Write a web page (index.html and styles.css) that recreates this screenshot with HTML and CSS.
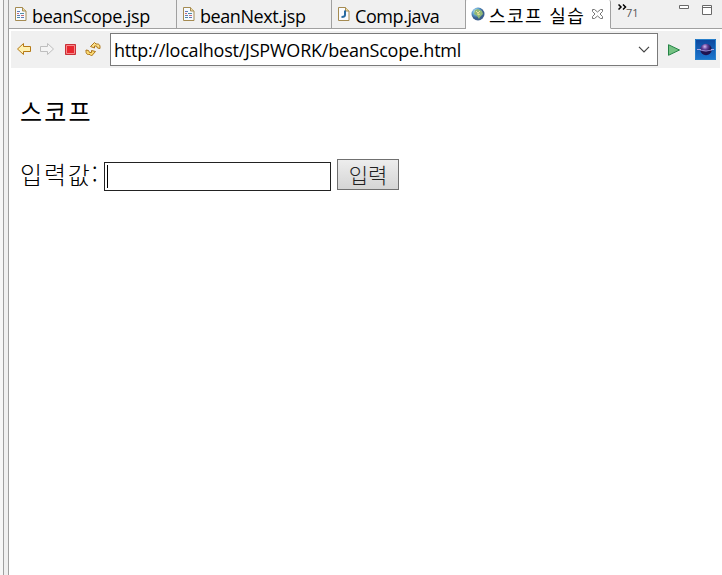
FILE: index.html
```html
<!DOCTYPE html>
<html lang="ko">
<head>
<meta charset="utf-8">
<title>스코프 실습</title>
<link rel="stylesheet" href="styles.css">
</head>
<body>
<svg width="0" height="0" class="defs">
  <symbol id="doc" viewBox="0 0 12 14"><path d="M.5.5h7l3.500 3.500v9.500H.5z" fill="#f5faff" stroke="#a58b52"/><path d="M7.500.5V4H11" fill="#eedba3" stroke="#a58b52"/><path d="M2 4.500h3M2 8.500h3M6 10.500h3" stroke="#6079b5"/><path d="M2 6.500h2M6 8.500h3" stroke="#c66b78"/><path d="M5 6.500h4M2 10.500h3" stroke="#518ba5"/></symbol>
</svg>
<div class="window">
  <div class="sash"></div>
  <main class="editor">
    <nav class="tabs">
      <div class="tab first"><svg class="file" width="12" height="14"><use href="#doc"/></svg><span class="t1">beanScope.jsp</span></div>
      <div class="tab second"><svg class="file" width="12" height="14"><use href="#doc"/></svg><span class="t2">beanNext.jsp</span></div>
      <div class="tab third"><svg class="file" width="12" height="14" viewBox="0 0 12 14"><path d="M.5.5h7l3.500 3.500v9.500H.5z" fill="#f8fbff" stroke="#a58b52"/><path d="M7.500.5V4H11" fill="#eedba3" stroke="#a58b52"/><path d="M7 3.500v4.500q0 2-3.500 2" fill="none" stroke="#286aa0" stroke-width="2"/></svg><span class="t3">Comp.java</span></div>
      <div class="tab active">
        <svg class="globe" width="14" height="14" viewBox="0 0 14 14"><defs><radialGradient id="g" cx=".35" cy=".3"><stop stop-color="#d5effa"/><stop offset=".6" stop-color="#5b9fd0"/><stop offset="1" stop-color="#3a5f8e"/></radialGradient></defs><circle cx="7" cy="7" r="6.500" fill="url(#g)"/><path d="M4 3l3-1 4 2 1 3-3 3-1 2-2-3-3-2z" fill="#8fb877"/><path d="M5 4l2 2 2-2M7 6v2l2-1" stroke="#ecdf9a" fill="none"/></svg>
        <span class="t4">스코프 실습</span>
        <svg class="close" width="11" height="10" viewBox="0 0 11 10"><path d="M.5.5h2l3 2.500 3-2.500h2v2L8 5l2.500 2.500v2h-2l-3-2.500-3 2.500h-2v-2L3 5 .5 2.500z" fill="#fff" stroke="#777"/></svg>
      </div>
      <div class="rest">
        <svg class="more" width="9" height="6" viewBox="0 0 9 6"><path d="M.5.5L3 3 .5 5.500M5 .5L7.500 3 5 5.500" fill="none" stroke="#000" stroke-width="1.500"/></svg>
        <span class="count">71</span>
        <svg class="winbtns" width="34" height="12" viewBox="0 0 34 12"><path d="M.5 1.500h9v3h-9zM23.500 1.500h9v9h-9zM23.500 3.500h9" fill="#fff" stroke="#696969"/></svg>
      </div>
    </nav>
    <div class="toolbar">
      <svg class="nav" width="94" height="36" viewBox="0 0 94 36">
        <path d="M6.500 18l6-5.500v3h7v5h-7v3z" fill="#fff1b0" stroke="#b67a16"/>
        <path d="M42.500 18l-6-5.500v3h-7v5h7v3z" fill="#f4f4f4" stroke="#bebebe"/>
        <path d="M54.500 13.500h10v10h-10z" fill="#e8272f" stroke="#c83138"/><path d="M55.500 14.500h8v8h-8z" fill="none" stroke="#f58a8c"/>
        <path d="M79.500 15.500l4-4 1.500 1.500h1.500c2 0 2.500 1.500 2.500 3v1.500l-2.500-.5-1-2h-2v2z" fill="#fbe08a" stroke="#ad7419"/>
        <path d="M84.500 20.500l-4 4.500-1.500-1.500h-1.500c-2 0-2.500-1.500-2.500-3V19l2.500.5 1 2h2v-2z" fill="#fbdb72" stroke="#ad7419"/>
      </svg>
      <div class="address"><span>http://localhost/JSPWORK/beanScope.html</span><svg width="12" height="7" viewBox="0 0 12 7"><path d="M1 .8l5 5 5-5" fill="none" stroke="#444" stroke-width="1.200"/></svg></div>
      <svg class="go" width="12" height="12" viewBox="0 0 12 12"><path d="M.5.7v10.600L11.500 6z" fill="#75c283" stroke="#238345"/></svg>
      <svg class="planet" width="21" height="21" viewBox="0 0 21 21"><defs><linearGradient id="b" x2="0" y2="1"><stop stop-color="#0d459c"/><stop offset="1" stop-color="#1c78d0"/></linearGradient><radialGradient id="p" cx=".4" cy=".25"><stop stop-color="#d5b9ed"/><stop offset=".5" stop-color="#61429a"/><stop offset="1" stop-color="#201451"/></radialGradient></defs><path d="M0 0h21v21H0z" fill="url(#b)"/><path d="M.5.5h20v20H.5z" fill="none" stroke="#2880cb"/><circle cx="11" cy="10.500" r="5.800" fill="url(#p)"/><path d="M2 10.500h4M16 10.500h3" stroke="#a6a3e5"/><path d="M5 11q6 2 12 0" fill="none" stroke="#a6a3e5" stroke-width=".8"/></svg>
    </div>
    <section class="page">
      <h1>스코프</h1>
      <form><label for="value">입력값:</label><div id="value" class="field"><i></i></div><button type="button">입력</button></form>
    </section>
  </main>
</div>
</body>
</html>
```
FILE: styles.css
```css
* { box-sizing: border-box; }
body { margin: 0; background: #fff; color: #000; overflow: hidden; font-family: "Open Sans", "Noto Sans CJK KR", sans-serif; }
.defs { position: absolute; }
svg { display: block; flex: none; }
.window { display: flex; width: 722px; height: 575px; }
.sash { width: 9px; flex: none; background: linear-gradient(90deg, #f7f7f7 0 3px, #a0a0a0 3px 4px, #f0f0f0 4px 8px, #a0a0a0 8px 9px); }
.editor { flex: 1; min-width: 0; }
.tabs { display: flex; height: 29px; background: #f0f0f0; font-size: 18px; line-height: 24px; white-space: nowrap; }
.tab { display: flex; align-items: flex-start; border-right: 1px solid #a0a0a0; border-bottom: 1px solid #a0a0a0; flex: none; padding-left: 6px; }
.tab span { margin: 4px 0 0 5px; }
.file { margin-top: 7px; }
.first { width: 168px; }
.second { width: 155px; }
.third { width: 134px; }
.active { width: 145px; background: #fff; border-bottom-color: #fff; padding-left: 5px; border-radius: 2px 2px 0 0; }
.globe { margin-top: 7px; }
.close { margin: 9px 0 0 7px; }
.t1 { letter-spacing: -.27px; }
.t2, .t3 { letter-spacing: -.42px; }
.tab .t4 { width: 96px; font-family: "Noto Sans CJK KR", sans-serif; font-size: 18px; letter-spacing: 1.4px; margin: 3px 0 0 4px; }
.rest { display: flex; flex: 1; border-bottom: 1px solid #a0a0a0; padding-left: 7px; }
.more { margin-top: 4px; }
.count { font: 11px/14px "Open Sans", sans-serif; color: #555; margin: 6px 0 0 -1px; }
.winbtns { margin: 4px 9px 0 auto; }
.toolbar { display: flex; height: 37px; margin: 2px 2px 0; background: #f0f0f0; align-items: flex-start; }
.nav { margin-right: 5px; }
.address { width: 548px; height: 33px; margin-top: 2px; border: 1px solid #7a7a7a; background: #fff; display: flex; align-items: center; padding: 0 7px 0 3px; font-size: 18px; letter-spacing: -.22px; }
.address svg { margin-left: auto; }
.go { margin: 13px 0 0 10px; }
.planet { margin: 8px 0 0 15px; }
.page { padding: 27px 0 0 11px; font-family: "Noto Sans CJK KR", sans-serif; font-weight: 300; }
h1 { font-size: 24px; line-height: 32px; font-weight: 400; letter-spacing: 2.2px; margin: 0 0 31px; }
form { display: flex; height: 32px; }
label { width: 84px; font-size: 24px; line-height: 32px; letter-spacing: 1.8px; white-space: nowrap; }
.field { width: 227px; height: 29px; margin-top: 4px; border: 1px solid #222; padding: 2px; }
.field i { display: block; width: 1px; height: 23px; background: #000; }
button { width: 62px; height: 31px; margin: 1px 0 0 6px; padding: 0 0 2px; border: 1px solid #707070; background: linear-gradient(#ededed, #d5d5d5); color: #222; font: 300 21px/26px "Noto Sans CJK KR", sans-serif; }
```
